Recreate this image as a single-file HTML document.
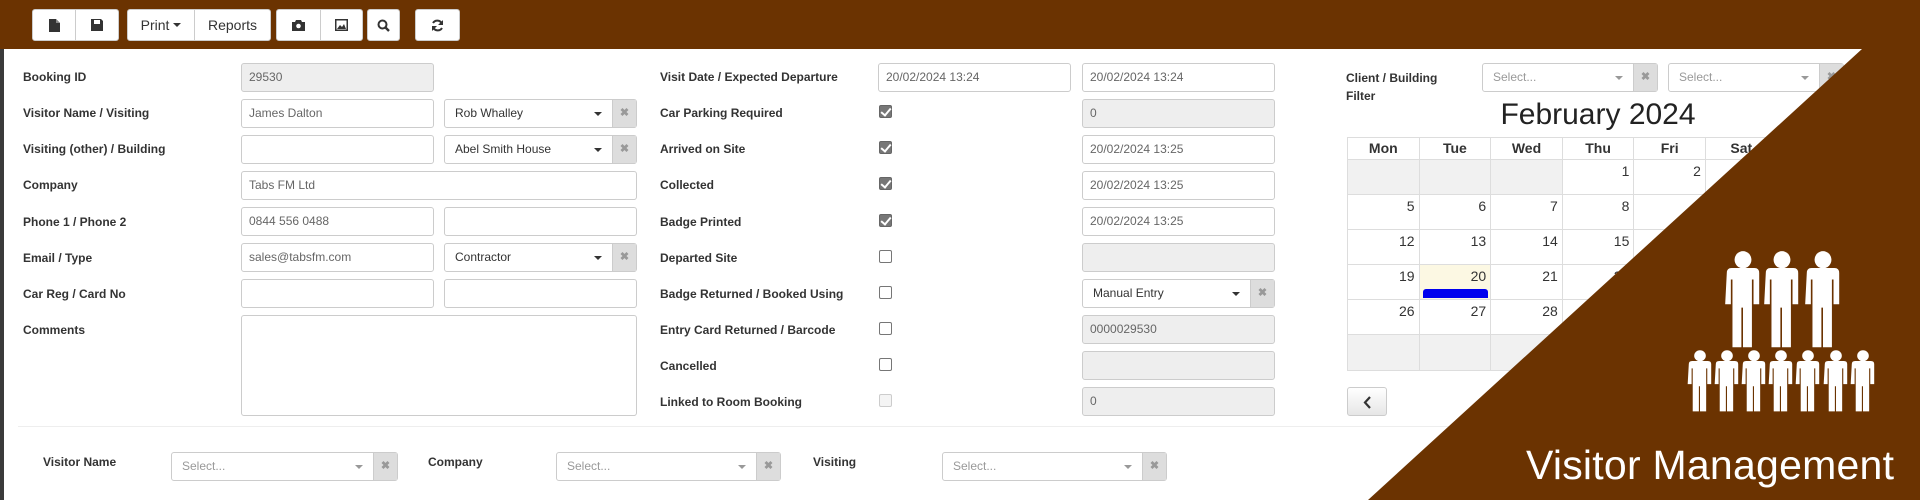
<!DOCTYPE html>
<html><head><meta charset="utf-8"><style>
*{box-sizing:border-box;margin:0;padding:0}
body{width:1920px;height:500px;overflow:hidden;background:#fff;font-family:"Liberation Sans",Arial,sans-serif;position:relative;color:#333}
.a{position:absolute}
.bar{left:0;top:0;width:1920px;height:49px;background:#6b3301}
.ls{left:0;top:49px;width:4px;height:451px;background:#3a3a3a}
.btn{position:absolute;top:9px;height:32px;background:#fff;border:1px solid #ccc;border-radius:3px;display:flex;align-items:center;justify-content:center;font-size:14px;color:#333}
.lab{position:absolute;font-size:12px;font-weight:bold;color:#333;line-height:14px}
.inp{position:absolute;height:29px;border:1px solid #ccc;border-radius:3px;background:#fff;font-size:12px;color:#666;padding-left:7px;line-height:27px}
.dis{background:#eee}
.sel{position:absolute;height:29px;border:1px solid #ccc;border-radius:3px;background:#fff;font-size:12px;color:#333;line-height:27px;padding-left:10px}
.sel .car{position:absolute;right:34px;top:12px;border-left:4px solid transparent;border-right:4px solid transparent;border-top:4px solid #333}
.sel .x{position:absolute;right:0;top:0;width:24px;height:27px;background:#ddd;color:#999;text-align:center;font-size:11px;font-weight:bold;border-left:1px solid #ccc}
.ph{color:#999}
.cb{position:absolute;left:879px;width:13px;height:13px;border:1px solid #767676;border-radius:2px;background:#fff}
.cb.on{background:#777;border-color:#666}
.cb.on:after{content:"";position:absolute;left:3px;top:0px;width:4px;height:8px;border:solid #fff;border-width:0 2px 2px 0;transform:rotate(40deg)}
table{border-collapse:collapse;position:absolute;left:1347px;top:137px}
td,th{border:1px solid #ddd;width:71.6px;font-size:14px;text-align:right;vertical-align:top;padding:3px 4px 0 0}
th{height:22px;text-align:center;font-weight:bold;padding:2px 0 0}
td{height:35px}
.g{background:#f1f1f1}
</style></head><body>
<div class="a bar"></div><div class="a ls"></div>
<div class="btn" style="left:32px;width:44px;border-radius:3px 0 0 3px"><svg width="11" height="13"><path d="M0 0h7l4 4v9H0z" fill="#333"/><path d="M7 0v4h4" fill="#888"/></svg></div>
<div class="btn" style="left:75px;width:44px;border-radius:0 3px 3px 0"><svg width="12" height="12"><path d="M0 0h10l2 2v10H0z" fill="#333"/><rect x="3" y="1" width="6" height="4" fill="#fff"/></svg></div>
<div class="btn" style="left:127px;width:68px;border-radius:3px 0 0 3px">Print&nbsp;<span style="border-left:4px solid transparent;border-right:4px solid transparent;border-top:4px solid #333;display:inline-block"></span></div>
<div class="btn" style="left:194px;width:77px;border-radius:0 3px 3px 0">Reports</div>
<div class="btn" style="left:276px;width:45px;border-radius:3px 0 0 3px"><svg width="13" height="11"><path d="M0 2h3l1-2h5l1 2h3v9H0z" fill="#333"/><circle cx="6.5" cy="6" r="2.3" fill="#fff"/></svg></div>
<div class="btn" style="left:320px;width:43px;border-radius:0 3px 3px 0"><svg width="13" height="12"><rect width="13" height="12" fill="#333"/><rect x="1.5" y="1.5" width="10" height="9" fill="#fff"/><path d="M2 10l3-4 2 2 2-3 2 5z" fill="#333"/></svg></div>
<div class="btn" style="left:367px;width:33px"><svg width="13" height="13"><circle cx="5.5" cy="5.5" r="4" fill="none" stroke="#333" stroke-width="2"/><path d="M8.5 8.5l3.5 3.5" stroke="#333" stroke-width="2.4"/></svg></div>
<div class="btn" style="left:415px;width:45px"><svg width="13" height="13"><path d="M11 5A5 5 0 0 0 2 4M2 8a5 5 0 0 0 9 1" fill="none" stroke="#333" stroke-width="2"/><path d="M12 1v5H7zM1 12V7h5z" fill="#333"/></svg></div>

<div class="lab" style="left:23px;top:70px">Booking ID</div>
<div class="inp dis" style="left:241px;top:63px;width:193px">29530</div>
<div class="lab" style="left:23px;top:106px">Visitor Name / Visiting</div>
<div class="inp" style="left:241px;top:99px;width:193px">James Dalton</div>
<div class="sel" style="left:444px;top:99px;width:193px">Rob Whalley<span class="car"></span><span class="x">✖</span></div>
<div class="lab" style="left:23px;top:142px">Visiting (other) / Building</div>
<div class="inp" style="left:241px;top:135px;width:193px"></div>
<div class="sel" style="left:444px;top:135px;width:193px">Abel Smith House<span class="car"></span><span class="x">✖</span></div>
<div class="lab" style="left:23px;top:178px">Company</div>
<div class="inp" style="left:241px;top:171px;width:396px">Tabs FM Ltd</div>
<div class="lab" style="left:23px;top:215px">Phone 1 / Phone 2</div>
<div class="inp" style="left:241px;top:207px;width:193px">0844 556 0488</div>
<div class="inp" style="left:444px;top:207px;width:193px"></div>
<div class="lab" style="left:23px;top:251px">Email / Type</div>
<div class="inp" style="left:241px;top:243px;width:193px">sales@tabsfm.com</div>
<div class="sel" style="left:444px;top:243px;width:193px">Contractor<span class="car"></span><span class="x">✖</span></div>
<div class="lab" style="left:23px;top:287px">Car Reg / Card No</div>
<div class="inp" style="left:241px;top:279px;width:193px"></div>
<div class="inp" style="left:444px;top:279px;width:193px"></div>
<div class="lab" style="left:23px;top:323px">Comments</div>
<div class="inp" style="left:241px;top:315px;width:396px;height:101px"></div>

<div class="lab" style="left:660px;top:70px">Visit Date / Expected Departure</div>
<div class="inp" style="left:878px;top:63px;width:193px">20/02/2024 13:24</div>
<div class="inp" style="left:1082px;top:63px;width:193px">20/02/2024 13:24</div>
<div class="lab" style="left:660px;top:106px">Car Parking Required</div><div class="cb on" style="top:105px"></div>
<div class="inp dis" style="left:1082px;top:99px;width:193px">0</div>
<div class="lab" style="left:660px;top:142px">Arrived on Site</div><div class="cb on" style="top:141px"></div>
<div class="inp" style="left:1082px;top:135px;width:193px">20/02/2024 13:25</div>
<div class="lab" style="left:660px;top:178px">Collected</div><div class="cb on" style="top:177px"></div>
<div class="inp" style="left:1082px;top:171px;width:193px">20/02/2024 13:25</div>
<div class="lab" style="left:660px;top:215px">Badge Printed</div><div class="cb on" style="top:214px"></div>
<div class="inp" style="left:1082px;top:207px;width:193px">20/02/2024 13:25</div>
<div class="lab" style="left:660px;top:251px">Departed Site</div><div class="cb" style="top:250px"></div>
<div class="inp dis" style="left:1082px;top:243px;width:193px"></div>
<div class="lab" style="left:660px;top:287px">Badge Returned / Booked Using</div><div class="cb" style="top:286px"></div>
<div class="sel" style="left:1082px;top:279px;width:193px">Manual Entry<span class="car"></span><span class="x">✖</span></div>
<div class="lab" style="left:660px;top:323px">Entry Card Returned / Barcode</div><div class="cb" style="top:322px"></div>
<div class="inp dis" style="left:1082px;top:315px;width:193px">0000029530</div>
<div class="lab" style="left:660px;top:359px">Cancelled</div><div class="cb" style="top:358px"></div>
<div class="inp dis" style="left:1082px;top:351px;width:193px"></div>
<div class="lab" style="left:660px;top:395px">Linked to Room Booking</div><div class="cb" style="top:394px;border-color:#ccc;background:#f4f4f4"></div>
<div class="inp dis" style="left:1082px;top:387px;width:193px">0</div>

<div class="lab" style="left:1346px;top:69px;line-height:18px">Client / Building<br>Filter</div>
<div class="sel ph" style="left:1482px;top:63px;width:176px">Select...<span class="car" style="border-top-color:#999"></span><span class="x">✖</span></div>
<div class="sel ph" style="left:1668px;top:63px;width:176px">Select...<span class="car" style="border-top-color:#999"></span><span class="x">✖</span></div>
<div class="a" style="left:1347px;top:98px;width:502px;text-align:center;font-size:30px;color:#222">February 2024</div>
<table>
<tr><th>Mon</th><th>Tue</th><th>Wed</th><th>Thu</th><th>Fri</th><th>Sat</th><th>Sun</th></tr>
<tr><td class="g"></td><td class="g"></td><td class="g"></td><td>1</td><td>2</td><td>3</td><td>4</td></tr>
<tr><td>5</td><td>6</td><td>7</td><td>8</td><td>9</td><td>10</td><td>11</td></tr>
<tr><td>12</td><td>13</td><td>14</td><td>15</td><td>16</td><td>17</td><td>18</td></tr>
<tr><td>19</td><td style="background:#fcf8e3;position:relative">20<div style="position:absolute;left:3px;bottom:1px;width:65px;height:9px;background:#0000ee;border-radius:3px 3px 0 0"></div></td><td>21</td><td>22</td><td>23</td><td>24</td><td>25</td></tr>
<tr><td>26</td><td>27</td><td>28</td><td>29</td><td class="g"></td><td class="g"></td><td class="g"></td></tr>
<tr><td class="g" style="height:36px"></td><td class="g"></td><td class="g"></td><td class="g"></td><td class="g"></td><td class="g"></td><td class="g"></td></tr>
</table>
<div class="a" style="left:1347px;top:387px;width:40px;height:29px;border:1px solid #ccc;border-radius:3px;background:linear-gradient(#fff,#e6e6e6)"><svg width="40" height="29"><path d="M22 9l-5 5.5 5 5.5" fill="none" stroke="#333" stroke-width="2.2"/></svg></div>
<div class="a" style="left:18px;top:426px;width:1902px;height:1px;background:#eee"></div>

<div class="lab" style="left:43px;top:455px">Visitor Name</div>
<div class="sel ph" style="left:171px;top:452px;width:227px">Select...<span class="car" style="border-top-color:#999"></span><span class="x">✖</span></div>
<div class="lab" style="left:428px;top:455px">Company</div>
<div class="sel ph" style="left:556px;top:452px;width:225px">Select...<span class="car" style="border-top-color:#999"></span><span class="x">✖</span></div>
<div class="lab" style="left:813px;top:455px">Visiting</div>
<div class="sel ph" style="left:942px;top:452px;width:225px">Select...<span class="car" style="border-top-color:#999"></span><span class="x">✖</span></div>

<svg class="a" style="left:0;top:0" width="1920" height="500">
<polygon points="1862,49 1920,49 1920,500 1368,500" fill="#6b3301"/>
<defs>
<g id="m"><circle cx="0" cy="-5" r="5.2"/><path d="M-10 3q0-3 3-3h14q3 0 3 3v19h-3.5v-15h-1v41h-5.5v-24h-1v24h-5.5v-41h-1v15h-3.5z"/></g>
</defs>
<g fill="#fff">
<use href="#m" transform="translate(1743,268) scale(1.62,1.65)"/>
<use href="#m" transform="translate(1782,268) scale(1.62,1.65)"/>
<use href="#m" transform="translate(1823,268) scale(1.62,1.65)"/>
<use href="#m" transform="translate(1700,361) scale(1.12,1.05)"/>
<use href="#m" transform="translate(1727,361) scale(1.12,1.05)"/>
<use href="#m" transform="translate(1754,361) scale(1.12,1.05)"/>
<use href="#m" transform="translate(1781,361) scale(1.12,1.05)"/>
<use href="#m" transform="translate(1808,361) scale(1.12,1.05)"/>
<use href="#m" transform="translate(1836,361) scale(1.12,1.05)"/>
<use href="#m" transform="translate(1863,361) scale(1.12,1.05)"/>
</g>
<text x="1894" y="479" text-anchor="end" fill="#fff" font-family="Liberation Sans, sans-serif" font-size="41" textLength="368">Visitor Management</text>
</svg>
</body></html>
